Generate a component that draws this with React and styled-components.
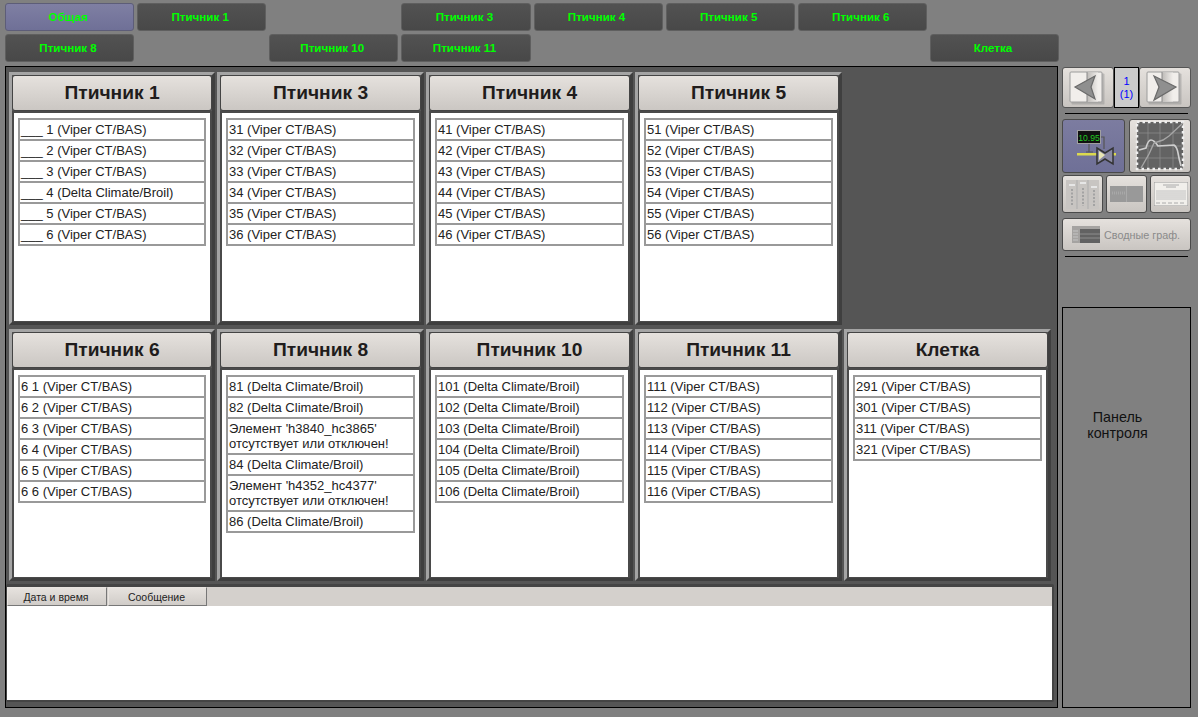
import React from 'react';
import styled, { createGlobalStyle } from 'styled-components';

const GlobalStyle = createGlobalStyle`
  html, body {
    margin: 0;
    padding: 0;
    background: #808080;
  }
  * {
    box-sizing: border-box;
  }
`;

const Page = styled.div`
  width: 1198px;
  height: 717px;
  overflow: hidden;
  display: flex;
  background: #808080;
  font-family: "Liberation Sans", Arial, sans-serif;
  color: #111;
`;

const LeftColumn = styled.div`
  width: 1053px;
  margin-left: 5px;
  padding-top: 3px;
`;

const TopNav = styled.div`
  display: grid;
  grid-template-columns: repeat(8, 1fr);
  grid-auto-rows: 28px;
  column-gap: 3px;
  row-gap: 3px;
  width: 1054px;
`;

const NavButton = styled.div`
  grid-column: ${(p) => p.$col};
  grid-row: ${(p) => p.$row};
  display: flex;
  align-items: center;
  justify-content: center;
  padding: 0 3px 2px 0;
  border: 1px solid ${(p) => (p.$active ? '#5d5d78' : '#5f5f5f')};
  border-radius: 3px;
  background: ${(p) =>
    p.$active
      ? 'linear-gradient(#7f7fa3, #6f7097)'
      : 'linear-gradient(#525252, #484848)'};
  color: #00ff00;
  font-size: 11.6px;
  font-weight: bold;
`;

const MainPanel = styled.div`
  margin-top: 4px;
  height: 642px;
  border: 1px solid #000;
  background: #555;
  padding: 5px 0 0 3px;
`;

const CardGrid = styled.div`
  display: grid;
  grid-template-columns: 206px repeat(4, 207px);
  grid-template-rows: 253px 252px;
  column-gap: 2px;
  row-gap: 4px;
`;

const Card = styled.div`
  display: flex;
  flex-direction: column;
  border-style: solid;
  border-width: 3px;
  border-color: #a4a4a4 #3f3f3f #3f3f3f #a4a4a4;
  min-height: 0;
`;

const CardTitle = styled.div`
  height: 36px;
  flex: none;
  display: flex;
  align-items: center;
  justify-content: center;
  border: 1px solid #444;
  border-radius: 3px;
  background: linear-gradient(#e5e1dd, #cbc7c3);
  color: #201c1c;
  font-size: 19.2px;
  font-weight: bold;
`;

const CardBody = styled.div`
  flex: 1;
  background: #fff;
  border-style: solid;
  border-color: #4a4a4a;
  border-width: 2px 2px 1px 2px;
  padding: 5px 4px 0 4px;
`;

const ItemList = styled.div`
  border: 2px solid #999;
  border-bottom-width: 0;
  background: #fff;
`;

const Item = styled.div`
  border-bottom: 2px solid #999;
  padding: 2px 1px;
  font-size: 13px;
  line-height: 15px;
  color: #222;
  white-space: pre-wrap;
`;

const LogPanel = styled.div`
  margin: 3px 0 0 -3px;
  width: 1048px;
  height: 118px;
  border-style: solid;
  border-color: #444;
  border-width: 3px 2px 2px 1px;
  border-radius: 2px;
  background: #fff;
`;

const LogHeader = styled.div`
  display: flex;
  height: 19px;
  background: #d4d0cc;
`;

const LogColumn = styled.div`
  width: ${(p) => p.$width}px;
  margin-right: 1px;
  padding-right: 2px;
  display: flex;
  align-items: center;
  justify-content: center;
  border: 1px solid;
  border-color: #e8e4e0 #777 #777 #e8e4e0;
  background: linear-gradient(#e6e2de, #d0ccc8);
  color: #222;
  font-size: 10.5px;
`;

const Sidebar = styled.div`
  width: 129px;
  margin-left: 4px;
  padding-top: 67px;
  display: flex;
  flex-direction: column;
`;

const Pager = styled.div`
  display: flex;
  height: 41px;
`;

const PagerButton = styled.div`
  flex: 1;
  border: 1px solid #555;
  border-radius: 3px;
  background: linear-gradient(#e5e1dd, #c9c5c1);
  display: flex;
  align-items: center;
  justify-content: center;
`;

const PageNumber = styled.div`
  width: 25px;
  flex: none;
  border: 1px solid #000;
  background: #cbcbcb;
  color: #0000ff;
  font-size: 11px;
  line-height: 13px;
  display: flex;
  align-items: center;
  justify-content: center;
  text-align: center;
`;

const Rule = styled.div`
  height: 1px;
  margin: ${(p) => p.$margin};
  background: #000;
`;

const ToolRow = styled.div`
  display: flex;
  justify-content: space-between;
  height: ${(p) => p.$height}px;
  margin-top: ${(p) => p.$top}px;
`;

const ToolButton = styled.div`
  width: ${(p) => p.$width}px;
  display: flex;
  align-items: center;
  justify-content: center;
  border: 1px solid #4a4a4a;
  border-radius: 3px;
  background: ${(p) =>
    p.$active
      ? 'linear-gradient(#7c7ca0, #6f7097)'
      : 'linear-gradient(#e5e1dd, #c9c5c1)'};
`;

const WideButton = styled.div`
  height: 33px;
  margin-top: 5px;
  display: flex;
  align-items: center;
  gap: 4px;
  padding-left: 9px;
  border: 1px solid #4a4a4a;
  border-radius: 3px;
  background: linear-gradient(#e5e1dd, #c9c5c1);
  color: #8a8a8a;
  font-size: 10.8px;
`;

const ControlPanel = styled.div`
  height: 401px;
  margin-top: 50px;
  border: 1px solid #000;
  padding: 101px 18px 0 0;
  text-align: center;
  font-size: 14.3px;
  line-height: 16px;
  color: #111;
`;

function Arrow({ left }) {
  const divider = left ? 21 : 19;
  const tri = left ? '9,18 29,7 25,18 29,30' : '33,18 11,7 16,18 11,31';
  const id = left ? 'shadeL' : 'shadeR';
  return (
    <svg width="44" height="38" viewBox="0 0 44 38">
      <defs>
        <linearGradient id={id}>
          <stop offset="0" stopColor="#bdbab7" />
          <stop offset="1" stopColor="#f1eeeb" />
        </linearGradient>
      </defs>
      <rect x="5.5" y="4.5" width="33" height="31" fill="#8d8d8d" opacity="0.45" rx="1" />
      <rect x="4" y="3" width="32" height="30" fill="#f1eeeb" stroke="#9c9c9c" rx="1" />
      <rect x={divider} y="3.5" width="11" height="29" fill={`url(#${id})`} />
      <line x1={divider} y1="3" x2={divider} y2="33" stroke="#8a8a8a" />
      <polygon points={tri} fill="#8f8f8f" stroke="#6a6a6a" strokeWidth="1.2" />
    </svg>
  );
}

function ValveIcon() {
  return (
    <svg width="61" height="52" viewBox="0 0 61 52">
      <rect x="14.5" y="10.5" width="23" height="13" fill="#111" stroke="#a0a0a0" />
      <text x="26" y="20.5" textAnchor="middle" fontSize="8.6" fontFamily="Liberation Sans" fill="#22cc22">10.95</text>
      <path d="M26 24v8M23 32h7M38 17h3v12" fill="none" stroke="#555" strokeWidth="1.2" />
      <rect x="14" y="33" width="39" height="2.5" fill="#dcd94e" />
      <path d="M34 28l8 5 8-5v16l-8-5-8 5z" fill="#8a8aa4" stroke="#333" strokeWidth="1.5" />
      <path d="M36 31l6 4-6 5z" fill="#e8e6b4" />
    </svg>
  );
}

function ChartIcon() {
  return (
    <svg width="60" height="52" viewBox="0 0 60 52">
      <rect x="7" y="2" width="46" height="47" fill="#636363" />
      <path d="M7 13h46M7 26h46M7 38h46M18 2v47M30 2v47M43 2v47" stroke="#8a8a8a" strokeWidth="0.8" />
      <rect x="7" y="2" width="46" height="47" fill="none" stroke="#efefef" strokeWidth="2.5" strokeDasharray="2.5 3" />
      <path d="M9 30L16 28Q18 20 21 20T28 26L44 25Q47 27 48 33T51 46" fill="none" stroke="#cfcfcf" strokeWidth="1.6" />
      <path d="M11 48L19 34 24 23 33 20 39 16 53 3" fill="none" stroke="#a6a6a6" strokeWidth="1.4" />
    </svg>
  );
}

function RackThumb() {
  return (
    <svg width="33" height="29" viewBox="0 0 33 29">
      <rect width="33" height="29" fill="#c8c5c2" />
      <path d="M11 0v29M22 0v29" stroke="#adadad" />
      <rect x="3" y="4" width="6" height="2" fill="#e6e6e6" />
      <rect x="14" y="2" width="6" height="2" fill="#e6e6e6" />
      <rect x="25" y="6" width="6" height="2" fill="#e6e6e6" />
      <path d="M6 9v17M17 8v18M28 10v16" stroke="#a3a3a3" strokeWidth="2" strokeDasharray="2 1.5" />
    </svg>
  );
}

function SplitThumb() {
  return (
    <svg width="33" height="16" viewBox="0 0 33 16">
      <rect width="33" height="16" fill="#999" />
      <rect x="16" width="1" height="16" fill="#aaa" />
      <path d="M2 7h13" stroke="#a8a8a8" strokeWidth="3" strokeDasharray="1 1" />
    </svg>
  );
}

function ReportThumb() {
  return (
    <svg width="34" height="24" viewBox="0 0 34 24">
      <rect width="34" height="24" fill="#f1efeb" stroke="#999" />
      <path d="M9 3h16M12 5h10" stroke="#aaa" strokeWidth="1" />
      <path d="M2 9h30M2 11h30M2 13h30M2 15h30M2 17h30" stroke="#c2c2c2" strokeWidth="1" />
      <path d="M2 21h30" stroke="#aaa" strokeWidth="1" strokeDasharray="4 2" />
    </svg>
  );
}

function SummaryThumb() {
  return (
    <svg width="28" height="17" viewBox="0 0 28 17">
      <rect width="28" height="17" fill="#a5a3a1" />
      <rect x="8" y="3" width="20" height="14" fill="#626262" />
      <path d="M8 8h20M8 12h20" stroke="#8d8d8d" />
      <path d="M1 5h5M1 8h5M1 11h5M1 14h5" stroke="#c4c4c4" />
    </svg>
  );
}

const navItems = [
  { label: 'Общая', col: 1, row: 1, active: true },
  { label: 'Птичник 1', col: 2, row: 1 },
  { label: 'Птичник 3', col: 4, row: 1 },
  { label: 'Птичник 4', col: 5, row: 1 },
  { label: 'Птичник 5', col: 6, row: 1 },
  { label: 'Птичник 6', col: 7, row: 1 },
  { label: 'Птичник 8', col: 1, row: 2 },
  { label: 'Птичник 10', col: 3, row: 2 },
  { label: 'Птичник 11', col: 4, row: 2 },
  { label: 'Клетка', col: 8, row: 2 },
];

const viper = '(Viper CT/BAS)';
const delta = '(Delta Climate/Broil)';
const missing = (id) => `Элемент '${id}' отсутствует или отключен!`;

const cards = [
  {
    title: 'Птичник 1',
    items: [
      `___ 1 ${viper}`,
      `___ 2 ${viper}`,
      `___ 3 ${viper}`,
      `___ 4 ${delta}`,
      `___ 5 ${viper}`,
      `___ 6 ${viper}`,
    ],
  },
  { title: 'Птичник 3', items: [31, 32, 33, 34, 35, 36].map((n) => `${n} ${viper}`) },
  { title: 'Птичник 4', items: [41, 42, 43, 44, 45, 46].map((n) => `${n} ${viper}`) },
  { title: 'Птичник 5', items: [51, 52, 53, 54, 55, 56].map((n) => `${n} ${viper}`) },
  { empty: true },
  { title: 'Птичник 6', items: [1, 2, 3, 4, 5, 6].map((n) => `6 ${n} ${viper}`) },
  {
    title: 'Птичник 8',
    items: [
      `81 ${delta}`,
      `82 ${delta}`,
      missing('h3840_hc3865'),
      `84 ${delta}`,
      missing('h4352_hc4377'),
      `86 ${delta}`,
    ],
  },
  { title: 'Птичник 10', items: [101, 102, 103, 104, 105, 106].map((n) => `${n} ${delta}`) },
  { title: 'Птичник 11', items: [111, 112, 113, 114, 115, 116].map((n) => `${n} ${viper}`) },
  { title: 'Клетка', items: [291, 301, 311, 321].map((n) => `${n} ${viper}`) },
];

export default function App() {
  return (
    <Page>
      <GlobalStyle />
      <LeftColumn>
        <TopNav>
          {navItems.map((item) => (
            <NavButton key={item.label} $col={item.col} $row={item.row} $active={item.active}>
              {item.label}
            </NavButton>
          ))}
        </TopNav>
        <MainPanel>
          <CardGrid>
            {cards.map((card, i) =>
              card.empty ? (
                <div key={i} />
              ) : (
                <Card key={card.title}>
                  <CardTitle>{card.title}</CardTitle>
                  <CardBody>
                    <ItemList>
                      {card.items.map((text) => (
                        <Item key={text}>{text}</Item>
                      ))}
                    </ItemList>
                  </CardBody>
                </Card>
              )
            )}
          </CardGrid>
          <LogPanel>
            <LogHeader>
              <LogColumn $width={100}>Дата и время</LogColumn>
              <LogColumn $width={99}>Сообщение</LogColumn>
            </LogHeader>
          </LogPanel>
        </MainPanel>
      </LeftColumn>
      <Sidebar>
        <Pager>
          <PagerButton><Arrow left /></PagerButton>
          <PageNumber>1<br />(1)</PageNumber>
          <PagerButton><Arrow /></PagerButton>
        </Pager>
        <Rule $margin="5px 3px 0" />
        <ToolRow $height={54} $top={5}>
          <ToolButton $width={63} $active><ValveIcon /></ToolButton>
          <ToolButton $width={62}><ChartIcon /></ToolButton>
        </ToolRow>
        <ToolRow $height={38} $top={2}>
          <ToolButton $width={41}><RackThumb /></ToolButton>
          <ToolButton $width={41}><SplitThumb /></ToolButton>
          <ToolButton $width={41}><ReportThumb /></ToolButton>
        </ToolRow>
        <WideButton><SummaryThumb />Сводные граф.</WideButton>
        <Rule $margin="5px 3px 0" />
        <ControlPanel>Панель<br />контроля</ControlPanel>
      </Sidebar>
    </Page>
  );
}
